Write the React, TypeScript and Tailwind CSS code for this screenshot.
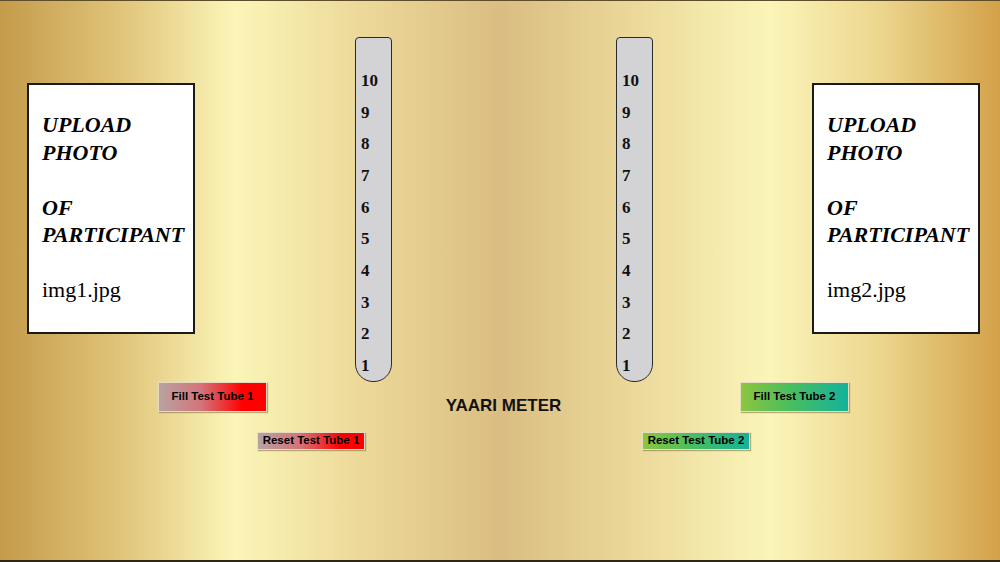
import React from "react";

const serif = "font-['Liberation_Serif','Times_New_Roman',serif]";
const sans = "font-['Liberation_Sans',Arial,sans-serif]";

function PhotoCard({ file }: { file: string }) {
  return (
    <div className={`w-[168px] h-[251px] bg-white border-2 border-[#1a1a1a] pl-[13px] pt-[26px] text-black ${serif}`}>
      <div className="text-[22px] leading-[27.5px] font-bold italic">
        <div>UPLOAD</div>
        <div>PHOTO</div>
        <div>&nbsp;</div>
        <div>OF</div>
        <div>PARTICIPANT</div>
      </div>
      <div className="text-[22px] leading-[27.5px] mt-[27px]">{file}</div>
    </div>
  );
}

function TestTube() {
  const marks = [10, 9, 8, 7, 6, 5, 4, 3, 2, 1];
  return (
    <div className={`w-[37px] h-[345px] bg-[#d3d3d5] border-[1.5px] border-[#2a2a2a] rounded-t-[4px] rounded-b-[18px] pl-[5px] pt-[27px] ${serif}`}>
      {marks.map((n) => (
        <div key={n} className="text-[17px] font-bold leading-[31.67px] text-[#111]">
          {n}
        </div>
      ))}
    </div>
  );
}

function GradButton({ label, grad, big }: { label: string; grad: string; big?: boolean }) {
  return (
    <button
      className={`${grad} ${big ? "w-[109px] h-[30px]" : "w-[108px] h-[18px]"} shrink-0 border border-[#e6dcc0] shadow-[1px_1px_1px_rgba(120,100,60,0.5)] text-[11.5px] font-bold text-black flex items-center justify-center whitespace-nowrap ${sans}`}
    >
      {label}
    </button>
  );
}

const redGrad = "bg-[linear-gradient(90deg,#b8a2a3_0%,#d47378_40%,#ff0000_78%,#ff0000_100%)]";
const greenGrad = "bg-[linear-gradient(90deg,#8cc63f_0%,#4cbd5e_45%,#13b39b_100%)]";

export default function App() {
  return (
    <div className="w-[1000px] h-[562px] overflow-hidden border-t border-b-2 border-t-[#5e4d2b] border-b-[#2e2616] bg-[linear-gradient(90deg,#c49b4b_0%,#e0c479_12%,#fbf5b8_23.5%,#ecd999_36%,#dabd82_50%,#ecda9b_64%,#fbf5b9_77%,#ecd68e_88%,#d3a149_100%)]">
      <div className="flex items-start pt-[36px]">
        <div className="ml-[27px] mt-[46px]">
          <PhotoCard file="img1.jpg" />
        </div>
        <div className="ml-[160px]">
          <TestTube />
        </div>
        <div className="ml-[224px]">
          <TestTube />
        </div>
        <div className="ml-[159px] mt-[46px]">
          <PhotoCard file="img2.jpg" />
        </div>
      </div>
      <div className="flex items-start h-[33px]">
        <div className="ml-[158px] shrink-0">
          <GradButton label="Fill Test Tube 1" big grad={redGrad} />
        </div>
        <div className={`ml-[177px] mt-[14px] w-[119px] shrink-0 text-center whitespace-nowrap text-[17px] font-bold leading-[20px] text-[#111] ${sans}`}>
          YAARI METER
        </div>
        <div className="ml-[177px] shrink-0">
          <GradButton label="Fill Test Tube 2" big grad={greenGrad} />
        </div>
      </div>
      <div className="flex items-start mt-[17px]">
        <div className="ml-[257px] shrink-0">
          <GradButton label="Reset Test Tube 1" grad={redGrad} />
        </div>
        <div className="ml-[277px] shrink-0">
          <GradButton label="Reset Test Tube 2" grad={greenGrad} />
        </div>
      </div>
    </div>
  );
}
